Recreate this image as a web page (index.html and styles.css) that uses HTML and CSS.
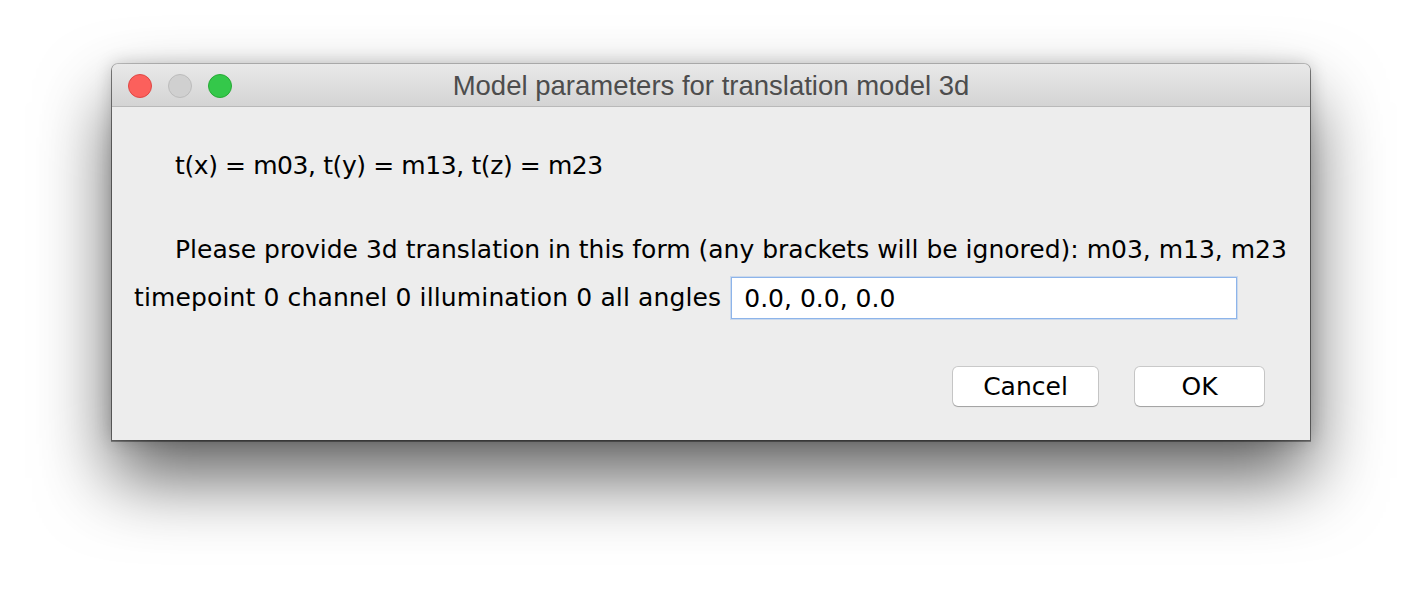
FILE: index.html
```html
<!DOCTYPE html>
<html>
<head>
<meta charset="utf-8">
<link rel="stylesheet" href="styles.css">
</head>
<body>
<div class="window">
  <div class="titlebar">
    <div class="lights">
      <span class="light red"></span>
      <span class="light gray"></span>
      <span class="light green"></span>
    </div>
    <div class="title">Model parameters for translation model 3d</div>
  </div>
  <div class="content">
    <div class="line1">t(x) = m03, t(y) = m13, t(z) = m23</div>
    <div class="line2">Please provide 3d translation in this form (any brackets will be ignored): m03, m13, m23</div>
    <div class="row">
      <span class="label">timepoint 0 channel 0 illumination 0 all angles</span>
      <div class="input">0.0, 0.0, 0.0</div>
    </div>
    <div class="buttons">
      <div class="btn cancel">Cancel</div>
      <div class="btn ok">OK</div>
    </div>
  </div>
</div>
</body>
</html>
```
FILE: styles.css
```css
html, body {
  margin: 0;
  padding: 0;
  background: #ffffff;
}
body {
  padding: 64px 112px 0 112px;
  height: 600px;
  box-sizing: border-box;
  overflow: hidden;
}
.window {
  width: 1198px;
  height: 376px;
  background: #ededed;
  border-radius: 6px 6px 0 0;
  box-shadow: 0 0 0 1px rgba(0,0,0,0.2), 0 1px 0 1px rgba(0,0,0,0.35), 0 0 18px rgba(0,0,0,0.2), 0 38px 72px rgba(0,0,0,0.62);
  display: flex;
  flex-direction: column;
  font-family: "DejaVu Sans", sans-serif;
  color: #000;
}
.titlebar {
  height: 43px;
  flex: 0 0 43px;
  box-sizing: border-box;
  border-bottom: 1px solid #b9b9b9;
  background: linear-gradient(#e9e9e9, #d4d4d4);
  border-radius: 6px 6px 0 0;
  display: flex;
  align-items: center;
  position: relative;
}
.lights {
  display: flex;
  gap: 16px;
  padding-left: 16px;
  padding-top: 2px;
}
.light {
  width: 24px;
  height: 24px;
  border-radius: 50%;
  box-sizing: border-box;
}
.red { background: #fc605c; border: 1px solid #df4744; }
.gray { background: #d0d0d0; border: 1px solid #bcbcbc; }
.green { background: #34c84a; border: 1px solid #27aa35; }
.title {
  position: absolute;
  left: 0;
  right: 0;
  top: 2px;
  bottom: 0;
  display: flex;
  align-items: center;
  justify-content: center;
  font-family: "Liberation Sans", sans-serif;
  font-size: 27.5px;
  color: #4d4d4d;
  pointer-events: none;
}
.content {
  font-size: 25px;
  padding: 0 0 0 22px;
}
.line1 {
  margin-top: 44px;
  padding-left: 41px;
  line-height: 30px;
  letter-spacing: -0.4px;
}
.line2 {
  margin-top: 54px;
  padding-left: 41px;
  line-height: 30px;
}
.row {
  margin-top: 12px;
  display: flex;
  align-items: center;
}
.label {
  line-height: 30px;
  letter-spacing: 0.13px;
}
.input {
  margin-left: 10px;
  width: 506px;
  height: 42px;
  box-sizing: border-box;
  background: #fff;
  border: 1px solid #8db4ea;
  box-shadow: 0 0 0 1px rgba(140,180,234,0.35);
  padding-left: 12px;
  display: flex;
  align-items: center;
}
.buttons {
  display: flex;
  justify-content: flex-end;
  gap: 37px;
  padding-right: 46px;
  margin-top: 48px;
}
.btn {
  height: 39px;
  box-sizing: border-box;
  background: #fff;
  border-radius: 5px;
  box-shadow: 0 0 0 1px rgba(0,0,0,0.15), 0 1px 1px rgba(0,0,0,0.2);
  display: flex;
  align-items: center;
  justify-content: center;
}
.cancel { width: 145px; }
.ok { width: 129px; }
```
